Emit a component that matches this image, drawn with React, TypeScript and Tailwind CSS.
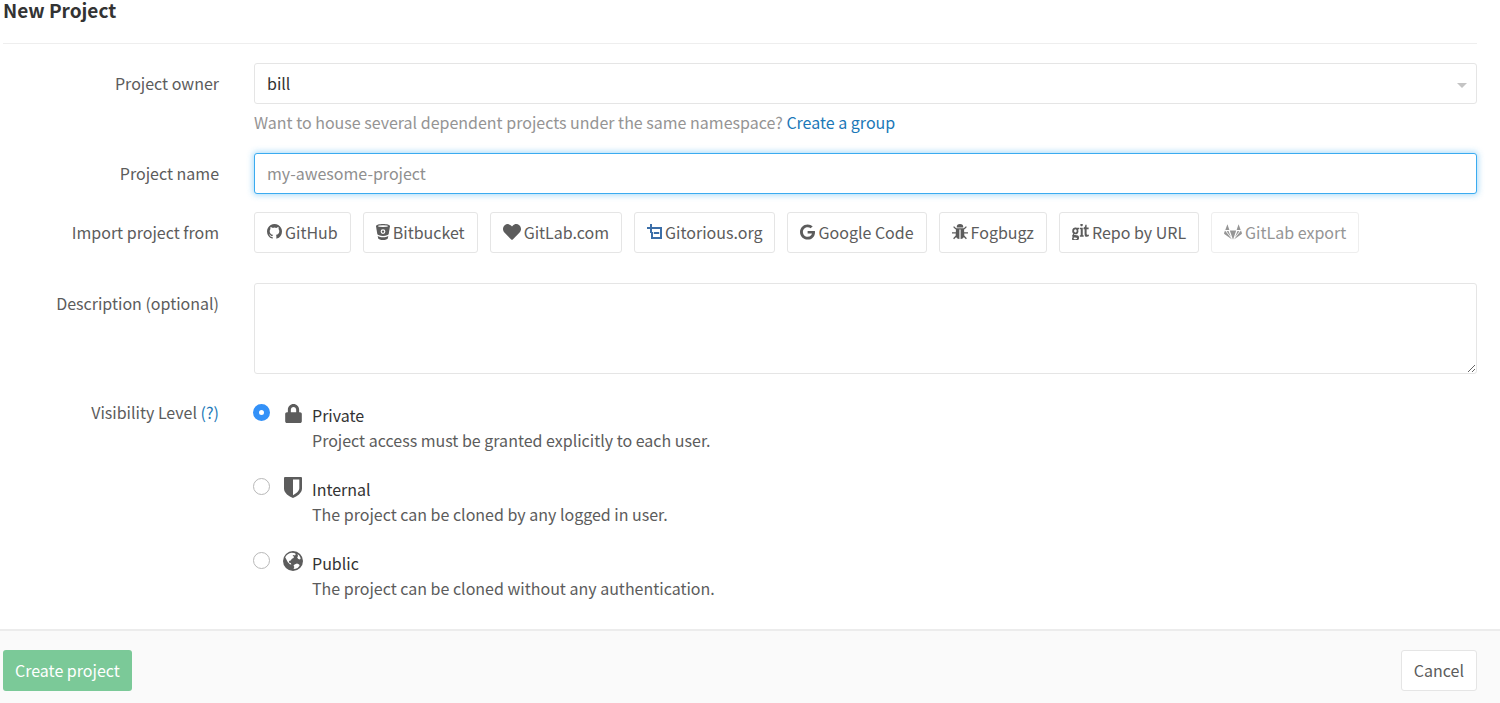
import type { ReactNode } from "react";
import { FaGit, FaGoogle, FaHeart, FaLock } from "react-icons/fa";

function GithubIcon() {
  return (
    <svg viewBox="128 128 1536 1536" className="size-[15px]" fill="currentColor" aria-hidden="true">
      <path d="M896 128q209 0 385.500 103t279.500 279.500 103 385.500q0 251-146.500 451.500t-378.500 277.500q-27 5-40-7t-13-30q0-3 .5-76.500t.5-134.500q0-97-52-142 57-6 102.500-18t94-39 81-66.500 53-105 20.500-150.500q0-119-79-206 37-91-8-204-28-9-81 11t-92 44l-38 24q-93-26-192-26t-192 26q-16-11-42.500-27t-83.500-38.500-85-13.500q-45 113-8 204-79 87-79 206 0 85 20.500 150t52.500 105 80.500 67 94 39 102.500 18q-39 36-49 103-21 10-45 15t-57 5-65.500-21.500-55.500-62.500q-19-32-48.500-52t-49.500-24l-20-3q-21 0-29 4.500t-5 11.500 9 14 13 12l7 5q22 10 43.500 38t31.500 51l10 23q13 38 44 61.500t67 30 69.500 7 55.500-3.500l23-4q0 38 .5 88.500t.5 54.500q0 18-13 30t-40 7q-232-77-378.500-277.500t-146.500-451.500q0-209 103-385.500t279.500-279.500 385.500-103z" />
    </svg>
  );
}

function BitbucketIcon() {
  return (
    <svg viewBox="0 0 14 16" className="h-4 w-3.5" aria-hidden="true">
      <path fill="currentColor" d="M0 2.200C0 .8 3.200 0 7 0s7 .8 7 2.200L12.700 10c-.2 1-2.700 1.900-5.700 1.900S1.500 11 1.300 10z" />
      <ellipse cx="7" cy="2.100" rx="5" ry=".9" fill="#fff" />
      <circle cx="7" cy="7.600" r="1.800" fill="none" stroke="#fff" strokeWidth="1.200" />
      <path fill="currentColor" d="M1.700 12c1.300.9 3.200 1.300 5.300 1.300s4-.4 5.300-1.300l-.5 2.500C11.400 15.400 9.500 16 7 16s-4.400-.6-4.800-1.500z" />
    </svg>
  );
}

function GitoriousIcon() {
  return (
    <svg viewBox="0 0 15 16" className="h-4 w-[15px]" fill="none" stroke="#3b6ea8" strokeWidth="2" aria-hidden="true">
      <path d="M0 4h15M4 0v9M5 8v6h9V4M6.800 9h5.400" />
    </svg>
  );
}

function BugIcon() {
  return (
    <svg viewBox="0 0 16 16" className="size-4" fill="currentColor" aria-hidden="true">
      <path d="M4.700 3.400a3.300 3.300 0 0 1 6.600 0z" />
      <path d="M4 4.200h8l.3 7c0 2.300-1.600 3.800-3.700 3.800V5.600H7.400V15c-2.100 0-3.700-1.500-3.700-3.800z" />
      <path d="M1.600 2.600 4 5M14.400 2.600 12 5M0 8.800h4M16 8.800h-4M1.600 14.800 4.200 12M14.400 14.800 11.800 12" stroke="currentColor" strokeWidth="1.300" />
    </svg>
  );
}

function GitlabIcon() {
  return (
    <svg viewBox="0 0 18 16" className="h-4 w-[18px]" fill="currentColor" aria-hidden="true">
      <path d="M3.400.2 5.400 6H1.300zM14.600.2 12.600 6h4.100zM5.800 6.400h6.400L9 15.800zM1 6.400l7.100 9.200L.3 9.900Q-.1 9.600.1 9zM17 6.400l-7.100 9.200 7.800-5.700q.4-.3.200-.9zM2.600 7.200l1.900-.2 2.400 6zM15.400 7.200l-1.900-.2-2.400 6z" />
    </svg>
  );
}

function ShieldIcon() {
  return (
    <svg viewBox="0 0 18 21" className="h-[21px] w-[18px]" aria-hidden="true">
      <path fill="currentColor" fillRule="evenodd" d="M1 0h16q1 0 1 1v10.500c0 4.500-5 8-9 9.500-4-1.500-9-5-9-9.500V1q0-1 1-1zM9 2.600v15.600c3-1.500 6.300-4 6.300-6.900V2.600z" />
    </svg>
  );
}

function GlobeIcon() {
  return (
    <svg viewBox="0 0 20 20" className="size-5" aria-hidden="true">
      <circle cx="10" cy="10" r="10" fill="currentColor" />
      <path fill="#fff" d="M2.200 6.200C3.500 3.600 5.800 2 8.500 1.700l2.800.4 1.500 1-.8 1.300-1.500-.4-1 .9 1.500.6-.4 1.400-1.700.9-1.200 1.800-1.700.4.200 1.700 1.500.4.700 1.500-1.500-.4-2.200-2.200z" />
      <path fill="#fff" d="m14.500 3 1.800 1.500 1.400 2.700-.7 1.200-1.800-.3-1-1.500.8-1.700zM11.500 13.600l2.500-1 2.200.8.4 1.300-2 2.200-2.800 1.200-1.300-.5.900-1.500-.9-1.300z" />
    </svg>
  );
}

const importSources: { label: string; icon: ReactNode; disabled?: boolean }[] = [
  { label: "GitHub", icon: <GithubIcon /> },
  { label: "Bitbucket", icon: <BitbucketIcon /> },
  { label: "GitLab.com", icon: <FaHeart className="size-[18px]" /> },
  { label: "Gitorious.org", icon: <GitoriousIcon /> },
  { label: "Google Code", icon: <FaGoogle className="h-4 w-[15px]" /> },
  { label: "Fogbugz", icon: <BugIcon /> },
  { label: "Repo by URL", icon: <FaGit viewBox="0 70 512 372" preserveAspectRatio="none" className="h-4 w-[17px]" /> },
  { label: "GitLab export", icon: <GitlabIcon />, disabled: true },
];

const levels = [
  { id: "private", title: "Private", text: "Project access must be granted explicitly to each user.", icon: <FaLock className="h-[19px] w-[17px]" /> },
  { id: "internal", title: "Internal", text: "The project can be cloned by any logged in user.", icon: <ShieldIcon /> },
  { id: "public", title: "Public", text: "The project can be cloned without any authentication.", icon: <GlobeIcon /> },
];

const row = "grid grid-cols-[216px_1fr] gap-x-[35px]";
const rowLabel = "pt-2 text-right";
const field = "block w-full rounded-[3px] border border-[#e5e5e5] bg-white px-3 outline-none";

export default function App() {
  return (
    <div className="flex min-h-screen flex-col bg-white font-['Noto_Sans_CJK_SC',sans-serif] text-base leading-6 text-[#5c5c5c]">
      <form className="flex grow flex-col" onSubmit={(e) => e.preventDefault()}>
        <div className="grow pr-[23px] pb-5 pl-[3px]">
          <h1 className="border-b border-[#eee] pb-[23px] text-[19px] leading-5 font-bold text-[#333]">New Project</h1>

          <div className={`${row} mt-[19px]`}>
            <label htmlFor="owner" className={rowLabel}>Project owner</label>
            <div>
              <div className="relative">
                <select id="owner" className={`${field} h-[41px] appearance-none pb-0.5 text-[#333]`}>
                  <option>bill</option>
                </select>
                <svg viewBox="0 0 10 5" className="pointer-events-none absolute top-5 right-2.5 h-[5px] w-2.5" fill="#c4c4c4" aria-hidden="true">
                  <path d="M0 0h10L5 5z" />
                </svg>
              </div>
              <p className="mt-1.5 text-[#959494]">
                Want to house several dependent projects under the same namespace?{" "}
                <a href="#new-group" className="text-[#1b78b8]">Create a group</a>
              </p>
            </div>
          </div>

          <div className={`${row} mt-[19px]`}>
            <label htmlFor="name" className={rowLabel}>Project name</label>
            <input
              id="name"
              autoFocus
              placeholder="my-awesome-project"
              className="block h-[41px] w-full rounded-[3px] border border-[#3aabf0] bg-white px-3 pb-0.5 shadow-[0_0_6px_1px_rgba(58,171,240,0.45)] outline-none placeholder:text-[#8f8f8f]"
            />
          </div>

          <div className={`${row} mt-[18px]`}>
            <div id="import-label" className={rowLabel}>Import project from</div>
            <div className="flex flex-wrap gap-3" role="group" aria-labelledby="import-label">
              {importSources.map((s) => (
                <button
                  key={s.label}
                  type="button"
                  disabled={s.disabled}
                  className="flex h-[41px] items-center gap-[3px] rounded-[3px] border border-[#e5e5e5] bg-white px-3 pb-0.5 whitespace-nowrap disabled:border-[#eee] disabled:text-[#959595]"
                >
                  {s.icon}
                  {s.label}
                </button>
              ))}
            </div>
          </div>

          <div className={`${row} mt-[30px]`}>
            <label htmlFor="description" className={rowLabel}>Description (optional)</label>
            <textarea id="description" className={`${field} h-[91px] resize-y py-2`} />
          </div>

          <div className={`${row} mt-[18px]`}>
            <div className={rowLabel}>
              Visibility Level <a href="#visibility-help" className="text-[#1b78b8]">(?)</a>
            </div>
            <div className="flex flex-col gap-6 pt-3">
              {levels.map((l) => (
                <div key={l.id} className="flex items-start">
                  <input
                    id={l.id}
                    type="radio"
                    name="visibility"
                    defaultChecked={l.id === "private"}
                    className="-ml-px size-[17px] appearance-none rounded-full border border-[#b8b8b8] bg-white checked:border-[6px] checked:border-[#3391f8]"
                  />
                  <label htmlFor={l.id} className="-mt-px flex leading-[25px]">
                    <span className="flex h-5 w-[46px] items-center justify-center">{l.icon}</span>
                    <span className="-ml-1 block pb-px">
                      <span className="block text-[#333]">{l.title}</span>
                      <span className="block">{l.text}</span>
                    </span>
                  </label>
                </div>
              ))}
            </div>
          </div>
        </div>

        <div className="flex justify-between border-t-2 border-[#ececec] bg-[#fafafa] pt-[19px] pr-[23px] pb-3 pl-[3px]">
          <button type="submit" className="h-[41px] rounded-[3px] bg-[#7bc998] px-3 pb-0.5 text-white">Create project</button>
          <button type="button" className="h-[41px] rounded-[3px] border border-[#e5e5e5] bg-white px-3 pb-0.5">Cancel</button>
        </div>
      </form>
    </div>
  );
}
